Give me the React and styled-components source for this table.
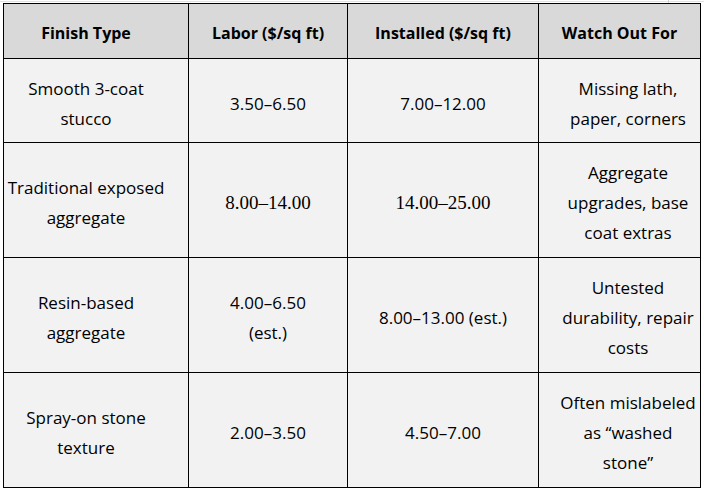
import React from "react";
import styled, { createGlobalStyle } from "styled-components";

const Global = createGlobalStyle`
  html, body { margin: 0; padding: 0; background: #ffffff; }
  body { font-family: "Open Sans", "Liberation Sans", sans-serif; color: #000; }
`;

const Page = styled.div`
  position: relative;
  width: 704px;
  height: 496px;
  padding: 1px 0 0 3px;
  box-sizing: border-box;
  &::after {
    content: "";
    position: absolute;
    left: 668px;
    top: 0;
    width: 1px;
    height: 3px;
    background: #d4d4d4;
  }
`;

const TopRule = styled.div`
  height: 1px;
  margin: 0 0 1px -3px;
  background: #e2e2e2;
`;

const Grid = styled.div`
  display: grid;
  grid-template-columns: 184px 158px 190px 161px;
  grid-template-rows: 54px 83px 114px 114px 114px;
  gap: 1px;
  padding: 1px;
  width: 698px;
  box-sizing: border-box;
  background: #000;
`;

const Cell = styled.div`
  display: flex;
  flex-direction: column;
  align-items: center;
  justify-content: center;
  text-align: center;
  box-sizing: border-box;
  background: ${(p) => (p.$head ? "#d9d9d9" : "#f2f2f2")};
  font-family: ${(p) =>
    p.$serif ? '"Liberation Serif", "Times New Roman", serif' : '"Open Sans", "Liberation Sans", sans-serif'};
  font-size: ${(p) => (p.$serif ? "19px" : p.$head ? "16px" : "17px")};
  font-weight: ${(p) => (p.$head ? 700 : 400)};
  line-height: 30px;
  white-space: nowrap;
  padding-top: ${(p) => (p.$head ? "4px" : "6px")};
  padding-left: ${(p) => p.$padL || 0}px;
  padding-right: ${(p) => p.$padR || 0}px;
`;

const headers = ["Finish Type", "Labor ($/sq ft)", "Installed ($/sq ft)", "Watch Out For"];

const rows = [
  [["Smooth 3-coat", "stucco"], ["3.50–6.50"], ["7.00–12.00"], ["Missing lath,", "paper, corners"]],
  [
    ["Traditional exposed", "aggregate"],
    { serif: true, lines: ["8.00–14.00"] },
    { serif: true, lines: ["14.00–25.00"] },
    ["Aggregate", "upgrades, base", "coat extras"],
  ],
  [["Resin-based", "aggregate"], ["4.00–6.50", "(est.)"], ["8.00–13.00 (est.)"], ["Untested", "durability, repair", "costs"]],
  [["Spray-on stone", "texture"], ["2.00–3.50"], ["4.50–7.00"], ["Often mislabeled", "as “washed", "stone”"]],
];

export default function App() {
  return (
    <>
      <Global />
      <Page>
        <TopRule />
        <Grid role="table">
          {headers.map((h, i) => (
            <Cell key={h} $head role="columnheader" $padR={i === 0 ? 20 : 0}>
              {h}
            </Cell>
          ))}
          {rows.map((row, ri) =>
            row.map((c, ci) => {
              const lines = Array.isArray(c) ? c : c.lines;
              const serif = !Array.isArray(c) && c.serif;
              return (
                <Cell
                  key={`${ri}-${ci}`}
                  $serif={serif}
                  $padR={ci === 0 ? 20 : 0}
                  $padL={ci === 3 ? 17 : 0}
                  role="cell"
                >
                  {lines.map((l) => (
                    <span key={l}>{l}</span>
                  ))}
                </Cell>
              );
            })
          )}
        </Grid>
      </Page>
    </>
  );
}
